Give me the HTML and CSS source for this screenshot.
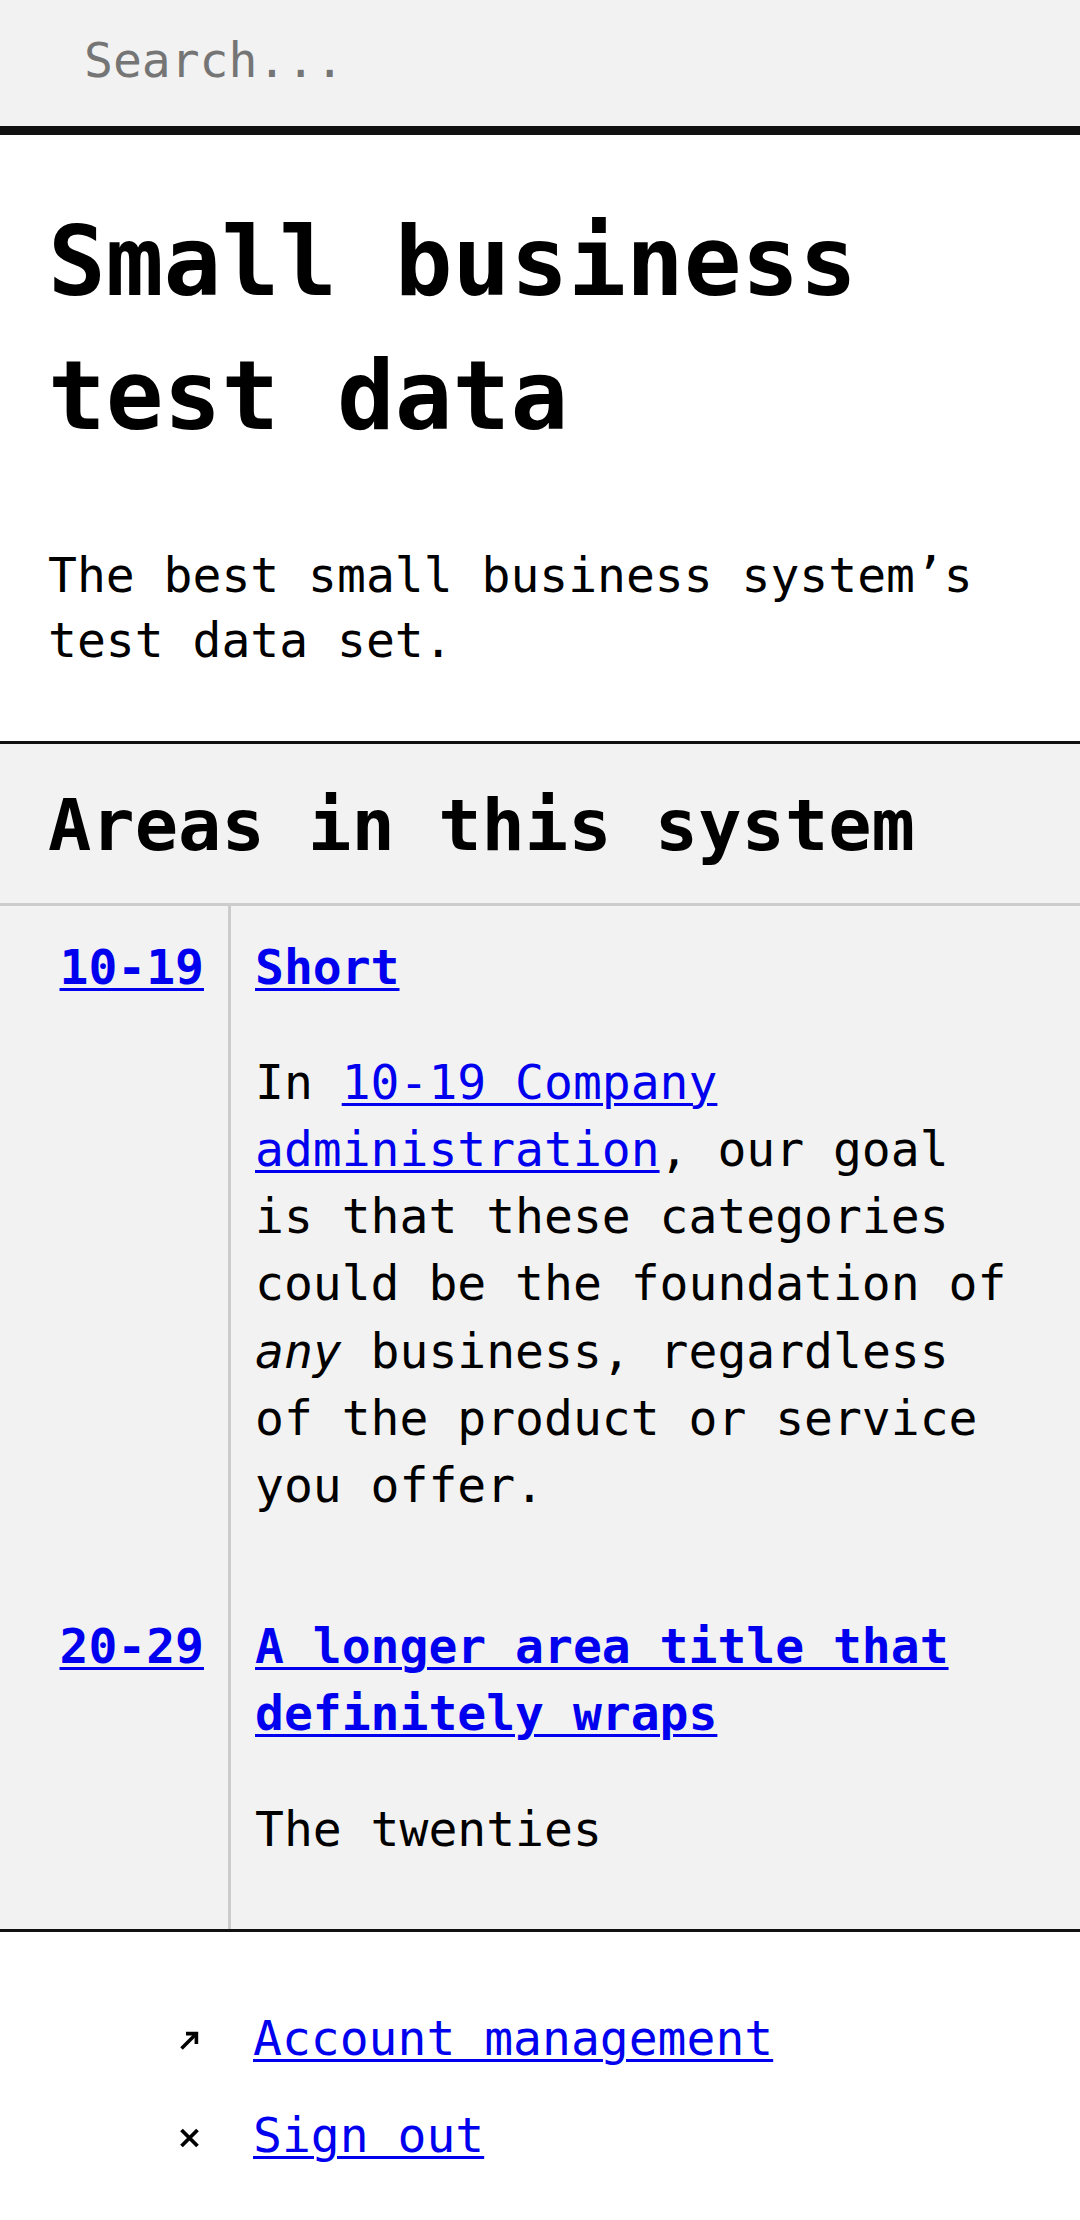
FILE: index.html
```html
<!DOCTYPE html>
<html lang="en">
<head>
<meta charset="utf-8">
<title>Small business test data</title>
<link rel="stylesheet" href="styles.css">
</head>
<body>
  <div class="search">
    <input class="search-input" type="search" placeholder="Search...">
  </div>

  <header class="intro">
    <h1 class="title">Small business test data</h1>
    <p class="lede">The best small business system’s test data set.</p>
  </header>

  <section class="areas">
    <h2 class="areas-title">Areas in this system</h2>
    <div class="area-grid">
      <div class="area-num"><a href="#">10-19</a></div>
      <div class="area-body">
        <h3 class="area-name"><a href="#">Short</a></h3>
        <p class="area-text">In <a href="#">10-19 Company administration</a>, our goal is that these categories could be the foundation of <em>any</em> business, regardless of the product or service you offer.</p>
      </div>

      <div class="area-num"><a href="#">20-29</a></div>
      <div class="area-body">
        <h3 class="area-name"><a href="#">A longer area title that definitely wraps</a></h3>
        <p class="area-text">The twenties</p>
      </div>
    </div>
  </section>

  <nav class="footer">
    <ul class="footer-list">
      <li class="footer-item">
        <svg class="icon" viewBox="0 0 21 21" width="21" height="21" aria-hidden="true">
          <path d="M2.5 18.5 L17 4" fill="none" stroke="#000" stroke-width="3.6"/>
          <path d="M7 3.6 H17.4 V14" fill="none" stroke="#000" stroke-width="3.6"/>
        </svg>
        <a href="#">Account management</a>
      </li>
      <li class="footer-item">
        <svg class="icon" viewBox="0 0 20 20" width="20" height="20" aria-hidden="true">
          <path d="M2 2 L18 18 M18 2 L2 18" fill="none" stroke="#000" stroke-width="3.8"/>
        </svg>
        <a href="#">Sign out</a>
      </li>
    </ul>
  </nav>
</body>
</html>
```

FILE: styles.css
```css
html, body {
  margin: 0;
  padding: 0;
  background: #ffffff;
}

body {
  font-family: "DejaVu Sans Mono", "Liberation Mono", monospace;
  font-size: 48px;
  line-height: 1.4;
  color: #000;
}

a {
  color: #0000ee;
  text-decoration: underline;
  text-decoration-thickness: 3px;
  text-underline-offset: 4px;
}

/* Search bar */
.search {
  background: #f2f2f2;
  border-bottom: 9px solid #111;
}

.search-input {
  display: block;
  box-sizing: border-box;
  width: 100%;
  height: 126px;
  margin: 0;
  padding: 0 0 6px 84px;
  border: 0;
  background: transparent;
  font-family: inherit;
  font-size: 48px;
  color: #000;
  outline: none;
  -webkit-appearance: none;
  appearance: none;
}

.search-input::placeholder {
  color: #757575;
}

/* Intro */
.intro {
  padding: 60px 48px 68px;
  border-bottom: 3px solid #111;
}

.title {
  margin: 0 0 79px;
  font-size: 96px;
  line-height: 134.4px;
  font-weight: bold;
}

.lede {
  margin: 0;
  line-height: 65px;
}

/* Areas */
.areas {
  background: #f2f2f2;
  border-bottom: 3px solid #111;
}

.areas-title {
  margin: 0;
  padding: 31px 48px 27px;
  font-size: 72px;
  line-height: 100.8px;
  font-weight: bold;
  border-bottom: 3px solid #cccccc;
}

.area-grid {
  display: grid;
  grid-template-columns: 228px 1fr;
}

.area-num {
  padding: 28px 24px 18px 0;
  text-align: right;
  font-weight: bold;
}

.area-body {
  border-left: 3px solid #cccccc;
  padding: 28px 56px 18px 24px;
}

.area-name {
  margin: 0 0 48px;
  font-size: 48px;
  line-height: 67.2px;
  font-weight: bold;
}

.area-text {
  margin: 0 0 48px;
  line-height: 67.2px;
}

/* Footer */
.footer {
  padding: 73px 0 40px;
}

.footer-list {
  list-style: none;
  margin: 0;
  padding: 0;
  display: flex;
  flex-direction: column;
  gap: 30px;
}

.footer-item {
  display: flex;
  align-items: center;
  padding-left: 179px;
  line-height: 67.2px;
}

.icon {
  flex: 0 0 auto;
  width: 21px;
  margin-top: 4px;
  margin-right: 53px;
}
```
